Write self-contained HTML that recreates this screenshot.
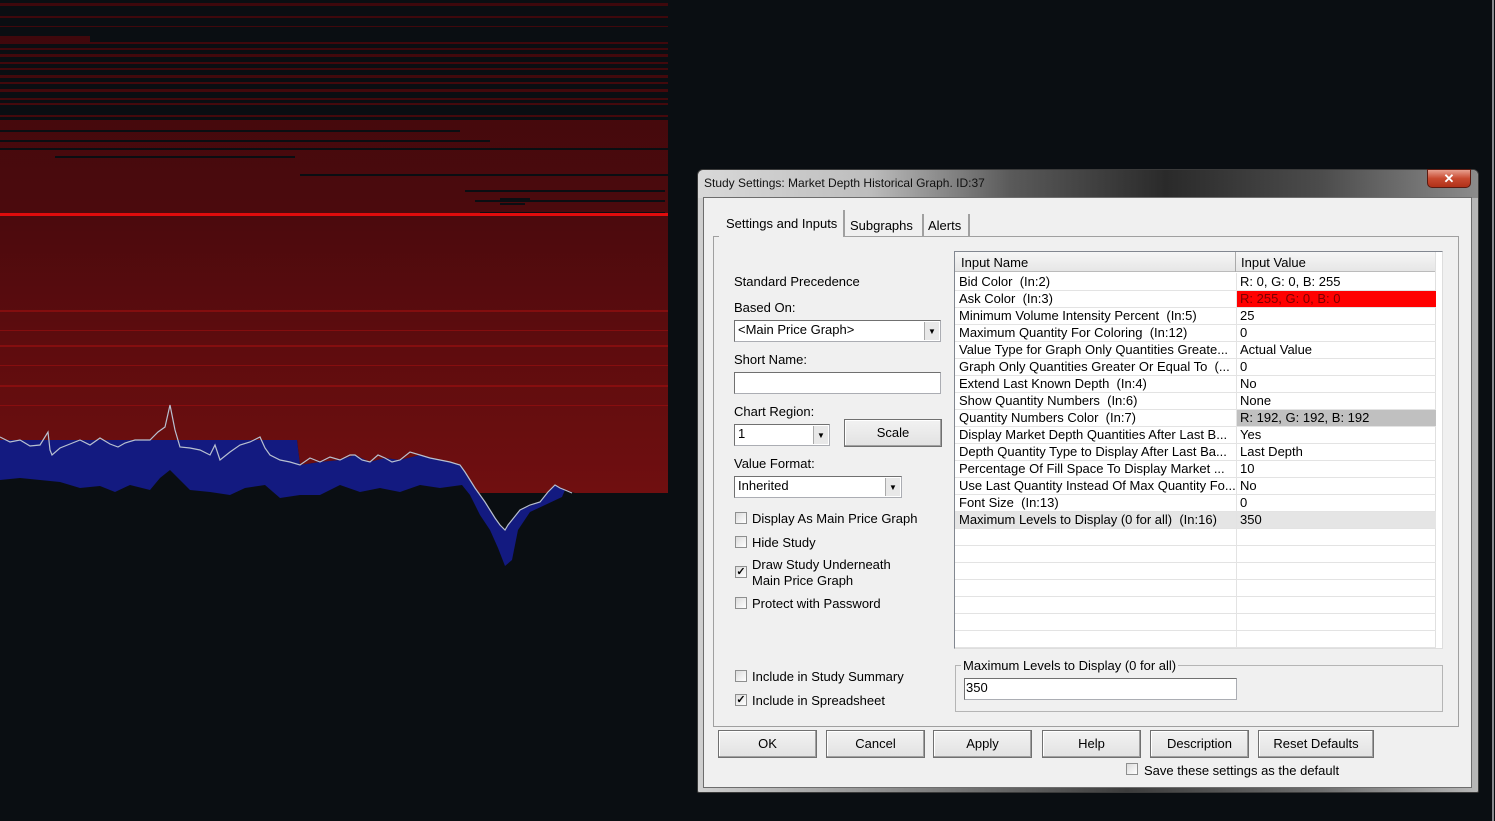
<!DOCTYPE html>
<html><head><meta charset="utf-8"><style>
*{margin:0;padding:0;box-sizing:border-box}
body{width:1495px;height:821px;background:#0a0e12;position:relative;overflow:hidden;font-family:"Liberation Sans",sans-serif;font-size:13px;color:#000}
.a{position:absolute}
.t{position:absolute;white-space:nowrap;line-height:15px}
.cb{position:absolute;width:12px;height:12px;border:1px solid #8e8f8f;background:linear-gradient(135deg,#dcdcdc,#fff);font-size:11px;line-height:10px;text-align:center;font-weight:bold}
.btn{position:absolute;height:28px;border:1px solid #707070;background:linear-gradient(#f2f2f2,#e2e2e2);text-align:center;line-height:26px;box-shadow:inset -1px -1px 0 #a0a0a0, inset 1px 1px 0 #fff}
.inp{position:absolute;background:#fff;border:1px solid #abadb3;border-top-color:#707070;border-left-color:#707070;padding-left:3px;line-height:18px}
.dd{position:absolute;right:1px;top:1px;bottom:1px;width:15px;background:#e8e8e8;border-left:1px solid #aaa;font-size:8px;text-align:center;line-height:20px}
.row{position:absolute;left:0;width:481px;height:17px;border-bottom:1px solid #e3e3e3;line-height:16px}
.row span{position:absolute;top:0;white-space:nowrap}
.row .n{left:4px}.row .v{left:285px}
</style></head><body>
<svg class="a" style="left:0;top:0" width="670" height="580">
<defs><linearGradient id="rg" x1="0" y1="0" x2="0" y2="1"><stop offset="0" stop-color="#3e080c"/><stop offset="0.45" stop-color="#4c0a0d"/><stop offset="0.7" stop-color="#5e0c0e"/><stop offset="1" stop-color="#700f10"/></linearGradient></defs>
<rect x="0" y="0" width="668" height="493" fill="url(#rg)"/>
<g fill="#0a0e12">
<rect x="0" y="0" width="668" height="3"/><rect x="0" y="6" width="668" height="10"/><rect x="0" y="18" width="668" height="8"/><rect x="0" y="27" width="668" height="9"/><rect x="90" y="36" width="578" height="6"/><rect x="0" y="44" width="668" height="4"/><rect x="0" y="50" width="668" height="4"/><rect x="0" y="57" width="668" height="5"/><rect x="0" y="64" width="668" height="4"/><rect x="0" y="70" width="668" height="5"/><rect x="0" y="78" width="668" height="4"/><rect x="0" y="84" width="668" height="5"/><rect x="0" y="92" width="668" height="6"/><rect x="0" y="100" width="668" height="3"/><rect x="0" y="105" width="668" height="10"/><rect x="0" y="117" width="668" height="3"/><rect x="0" y="130" width="460" height="2"/><rect x="0" y="140" width="490" height="2"/><rect x="0" y="148" width="668" height="2"/><rect x="55" y="156" width="240" height="2"/><rect x="300" y="174" width="368" height="2"/><rect x="465" y="190" width="200" height="2"/><rect x="475" y="200" width="190" height="2"/><rect x="480" y="212" width="185" height="2"/><rect x="500" y="198" width="30" height="2"/><rect x="500" y="203" width="25" height="2"/>
</g>
<rect x="0" y="213" width="668" height="3" fill="#e00c0c"/>
<g fill="#a01010" opacity="0.6"><rect x="0" y="310" width="668" height="2"/><rect x="0" y="330" width="668" height="1"/><rect x="0" y="345" width="668" height="2"/><rect x="0" y="365" width="668" height="1"/><rect x="0" y="385" width="668" height="2"/><rect x="0" y="405" width="668" height="1"/></g>
<rect x="575" y="493" width="95" height="90" fill="#0a0e12"/>
<polygon fill="#0a0e12" points="0,440 297,440 300,465 320,462 340,460 355,455 370,462 385,458 400,460 420,455 440,460 460,465 470,480 480,495 490,510 500,525 505,530 512,520 520,510 540,502 555,485 565,490 575,493 575,580 0,580"/>
<polygon fill="#131a80" points="0,440 297,440 300,465 320,462 340,460 355,455 370,462 385,458 400,460 420,455 440,460 460,465 470,480 480,495 490,510 500,525 505,530 512,520 520,510 540,502 555,485 565,490 562,497 545,505 530,512 518,530 512,560 505,566 498,548 490,530 480,515 470,495 462,485 440,488 420,485 400,492 380,488 360,492 340,485 320,495 300,495 280,498 265,485 245,488 230,495 210,492 190,490 170,470 160,478 150,490 130,485 115,492 100,486 80,488 60,482 40,480 20,478 0,480"/>
<polyline fill="none" stroke="#b8c0d0" stroke-width="1.2" points="0,437 10,442 20,440 30,446 40,445 48,432 50,450 52,455 60,448 70,444 80,440 90,445 100,438 110,444 118,447 125,443 135,440 150,440 158,432 165,427 170,405 173,420 175,430 180,447 190,448 200,450 210,455 215,445 220,460 230,452 240,445 250,442 260,437 265,448 270,455 280,460 290,462 300,465 310,458 320,462 330,457 340,460 350,455 355,455 362,460 370,462 378,455 385,458 392,462 400,460 410,452 420,455 430,458 440,460 450,462 460,465 465,472 470,480 475,488 480,495 485,502 490,510 495,518 500,525 505,530 508,525 512,520 516,515 520,510 530,505 540,502 548,492 555,485 560,488 565,490 572,493"/>
</svg>
<div class="a" style="left:1492px;top:0;width:2px;height:821px;background:#8a8c90"></div>

<!-- dialog -->
<div class="a" style="left:697px;top:169px;width:782px;height:624px;border:1px solid #3a3a3a;border-radius:6px 6px 2px 2px;background:linear-gradient(90deg,#d0d0d0 0,#9a9a9a 20%,#3c3c3c 55%,#6e6e6e 80%,#b8b8b8 100%)"></div>
<div class="a" style="left:698px;top:170px;width:780px;height:28px;border-radius:6px 6px 0 0;background:linear-gradient(90deg,#d9d9d9 0,#bdbdbd 22%,#5a5a5a 40%,#2a2a2a 60%,#4c4c4c 80%,#8c8c8c 100%)"></div>
<div class="t" style="left:704px;top:176px;font-size:12px;color:#111">Study Settings: Market Depth Historical Graph. ID:37</div>
<div class="a" style="left:1427px;top:169px;width:44px;height:19px;border:1px solid #5a1a10;border-radius:0 0 5px 5px;background:linear-gradient(#e8a090,#c84a30 50%,#b03018);color:#fff;text-align:center;font-size:13px;font-weight:bold;line-height:17px">✕</div>
<div class="a" style="left:703px;top:197px;width:769px;height:591px;background:#f0f0f0;border:1px solid #6d6d6d"></div>

<!-- tabs -->
<div class="a" style="left:713px;top:236px;width:746px;height:491px;border:1px solid #a0a0a0;background:#f0f0f0"></div>
<div class="a" style="left:719px;top:210px;width:126px;height:27px;background:#f0f0f0;border-right:2px solid #a0a0a0"></div>
<div class="t" style="left:726px;top:216px">Settings and Inputs</div>
<div class="a" style="left:845px;top:214px;width:79px;height:22px;border-right:2px solid #a0a0a0"></div>
<div class="t" style="left:850px;top:218px">Subgraphs</div>
<div class="a" style="left:924px;top:214px;width:46px;height:22px;border-right:2px solid #a0a0a0"></div>
<div class="t" style="left:928px;top:218px">Alerts</div>

<!-- left column -->
<div class="t" style="left:734px;top:274px">Standard Precedence</div>
<div class="t" style="left:734px;top:300px">Based On:</div>
<div class="inp" style="left:734px;top:320px;width:207px;height:22px">&lt;Main Price Graph&gt;<div class="dd">▼</div></div>
<div class="t" style="left:734px;top:352px">Short Name:</div>
<div class="inp" style="left:734px;top:372px;width:207px;height:22px"></div>
<div class="t" style="left:734px;top:404px">Chart Region:</div>
<div class="inp" style="left:734px;top:424px;width:96px;height:22px">1<div class="dd">▼</div></div>
<div class="btn" style="left:844px;top:419px;width:98px;height:28px">Scale</div>
<div class="t" style="left:734px;top:456px">Value Format:</div>
<div class="inp" style="left:734px;top:476px;width:168px;height:22px">Inherited<div class="dd">▼</div></div>

<div class="cb" style="left:735px;top:512px"></div><div class="t" style="left:752px;top:511px">Display As Main Price Graph</div>
<div class="cb" style="left:735px;top:536px"></div><div class="t" style="left:752px;top:535px">Hide Study</div>
<div class="cb" style="left:735px;top:566px">✓</div><div class="t" style="left:752px;top:557px;line-height:16px">Draw Study Underneath<br>Main Price Graph</div>
<div class="cb" style="left:735px;top:597px"></div><div class="t" style="left:752px;top:596px">Protect with Password</div>
<div class="cb" style="left:735px;top:670px"></div><div class="t" style="left:752px;top:669px">Include in Study Summary</div>
<div class="cb" style="left:735px;top:694px">✓</div><div class="t" style="left:752px;top:693px">Include in Spreadsheet</div>

<!-- table -->
<div class="a" style="left:954px;top:251px;width:489px;height:398px;background:#fff;border:1px solid #828790;border-right-color:#ddd;border-bottom-color:#ddd;overflow:hidden">
<div class="a" style="left:0;top:0;width:480px;height:20px;background:linear-gradient(#f6f6f6,#e6e6e6);border-bottom:1px solid #bbb"></div>
<div class="a" style="left:280px;top:0;width:1px;height:20px;background:#aaa"></div>
<div class="a" style="left:480px;top:0;width:1px;height:396px;background:#e0e0e0"></div>
<div class="t" style="left:6px;top:3px">Input Name</div>
<div class="t" style="left:286px;top:3px">Input Value</div>
<div class="a" style="left:0;top:22px;width:481px">
<div class="row" style="top:0"><span class="n">Bid Color &nbsp;(In:2)</span><span class="v">R: 0, G: 0, B: 255</span></div>
<div class="row" style="top:17px"><span class="n">Ask Color &nbsp;(In:3)</span><span class="v" style="left:282px;width:199px;height:16px;background:#ff0000;color:#7a0000;padding-left:3px">R: 255, G: 0, B: 0</span></div>
<div class="row" style="top:34px"><span class="n">Minimum Volume Intensity Percent &nbsp;(In:5)</span><span class="v">25</span></div>
<div class="row" style="top:51px"><span class="n">Maximum Quantity For Coloring &nbsp;(In:12)</span><span class="v">0</span></div>
<div class="row" style="top:68px"><span class="n">Value Type for Graph Only Quantities Greate...</span><span class="v">Actual Value</span></div>
<div class="row" style="top:85px"><span class="n">Graph Only Quantities Greater Or Equal To &nbsp;(...</span><span class="v">0</span></div>
<div class="row" style="top:102px"><span class="n">Extend Last Known Depth &nbsp;(In:4)</span><span class="v">No</span></div>
<div class="row" style="top:119px"><span class="n">Show Quantity Numbers &nbsp;(In:6)</span><span class="v">None</span></div>
<div class="row" style="top:136px"><span class="n">Quantity Numbers Color &nbsp;(In:7)</span><span class="v" style="left:282px;width:199px;height:16px;background:#c0c0c0;padding-left:3px">R: 192, G: 192, B: 192</span></div>
<div class="row" style="top:153px"><span class="n">Display Market Depth Quantities After Last B...</span><span class="v">Yes</span></div>
<div class="row" style="top:170px"><span class="n">Depth Quantity Type to Display After Last Ba...</span><span class="v">Last Depth</span></div>
<div class="row" style="top:187px"><span class="n">Percentage Of Fill Space To Display Market ...</span><span class="v">10</span></div>
<div class="row" style="top:204px"><span class="n">Use Last Quantity Instead Of Max Quantity Fo...</span><span class="v">No</span></div>
<div class="row" style="top:221px"><span class="n">Font Size &nbsp;(In:13)</span><span class="v">0</span></div>
<div class="row" style="top:238px;background:#e5e5e5"><span class="n">Maximum Levels to Display (0 for all) &nbsp;(In:16)</span><span class="v">350</span></div>
<div class="row" style="top:255px"></div><div class="row" style="top:272px"></div><div class="row" style="top:289px"></div><div class="row" style="top:306px"></div><div class="row" style="top:323px"></div><div class="row" style="top:340px"></div><div class="row" style="top:357px"></div>
</div>
<div class="a" style="left:281px;top:21px;width:1px;height:376px;background:#e3e3e3"></div>
</div>

<!-- group box -->
<div class="a" style="left:955px;top:665px;width:488px;height:47px;border:1px solid #b5b5b5"></div>
<div class="t" style="left:961px;top:658px;background:#f0f0f0;padding:0 2px">Maximum Levels to Display (0 for all)</div>
<div class="inp" style="left:964px;top:678px;width:273px;height:22px;padding-left:1px">350</div>

<!-- buttons -->
<div class="btn" style="left:718px;top:730px;width:99px">OK</div>
<div class="btn" style="left:826px;top:730px;width:99px">Cancel</div>
<div class="btn" style="left:933px;top:730px;width:99px">Apply</div>
<div class="btn" style="left:1042px;top:730px;width:99px">Help</div>
<div class="btn" style="left:1150px;top:730px;width:99px">Description</div>
<div class="btn" style="left:1258px;top:730px;width:116px">Reset Defaults</div>
<div class="cb" style="left:1126px;top:763px"></div><div class="t" style="left:1144px;top:763px">Save these settings as the default</div>
</body></html>
